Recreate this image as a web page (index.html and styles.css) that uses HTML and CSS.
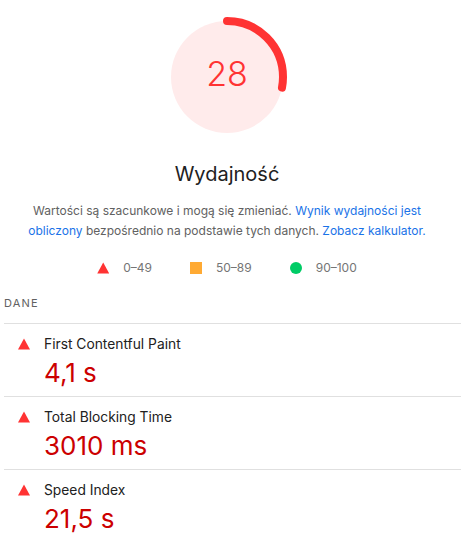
FILE: index.html
```html
<!DOCTYPE html>
<html>

<head>
    <link rel="stylesheet" href="styles.css">
</head>

<body>
    <main class="report">
        <section class="summary">
            <div class="gauge">
                <svg viewBox="0 0 120 120" width="120" height="120">
                    <circle class="gauge-base" cx="60" cy="60" r="56"></circle>
                    <circle class="gauge-arc" cx="60" cy="60" r="56" transform="rotate(-90 60 60)"></circle>
                </svg>
                <div class="gauge-value">28</div>
            </div>
            <h1 class="title">Wydajność</h1>
            <p class="desc">Wartości są szacunkowe i mogą się zmieniać. <a href="#">Wynik wydajności jest obliczony</a> bezpośrednio na podstawie tych danych. <a href="#">Zobacz kalkulator.</a></p>
            <div class="legend">
                <span class="legend-item"><span class="icon tri"></span>0–49</span>
                <span class="legend-item"><span class="icon sq"></span>50–89</span>
                <span class="legend-item"><span class="icon dot"></span>90–100</span>
            </div>
        </section>
        <section class="metrics">
            <div class="metrics-head">DANE</div>
            <div class="metric">
                <span class="icon tri"></span>
                <div>
                    <div class="metric-title">First Contentful Paint</div>
                    <div class="metric-value">4,1 s</div>
                </div>
            </div>
            <div class="metric">
                <span class="icon tri"></span>
                <div>
                    <div class="metric-title">Total Blocking Time</div>
                    <div class="metric-value">3010 ms</div>
                </div>
            </div>
            <div class="metric">
                <span class="icon tri"></span>
                <div>
                    <div class="metric-title">Speed Index</div>
                    <div class="metric-value">21,5 s</div>
                </div>
            </div>
        </section>
    </main>
</body>

</html>
```

FILE: styles.css
```css
* {
    margin: 0;
    padding: 0;
    box-sizing: border-box;
}

body {
    font-family: Inter, "Noto Sans", sans-serif;
    background: #fff;
    color: #212121;
}

.report {
    width: 461px;
}

.summary {
    width: 454px;
    display: flex;
    flex-direction: column;
    align-items: center;
    padding-top: 17px;
}

.gauge {
    position: relative;
    width: 120px;
    height: 120px;
}

.gauge svg {
    display: block;
}

.gauge-base {
    fill: #ffebeb;
}

.gauge-arc {
    fill: none;
    stroke: #ff3333;
    stroke-width: 8;
    stroke-linecap: round;
    stroke-dasharray: 98.5 351.9;
}

.gauge-value {
    position: absolute;
    top: 0;
    left: 0;
    width: 120px;
    height: 112px;
    display: flex;
    align-items: center;
    justify-content: center;
    font-size: 34px;
    font-weight: 300;
    color: #ff3333;
}

.title {
    margin-top: 23px;
    font-size: 20px;
    font-weight: 400;
    line-height: 28px;
    color: #212121;
}

.desc {
    margin-top: 13px;
    padding: 0 14px;
    font-size: 12px;
    line-height: 20px;
    text-align: center;
    color: #616161;
}

.desc a {
    color: #1a73e8;
    text-decoration: none;
}

.legend {
    margin-top: 18px;
    display: flex;
    gap: 38px;
    font-size: 12px;
    color: #757575;
}

.legend-item {
    display: flex;
    align-items: center;
    gap: 14px;
    line-height: 18px;
}

.icon {
    display: inline-block;
    width: 12px;
    height: 12px;
    flex: none;
}

.tri {
    background: #ff3333;
    clip-path: polygon(50% 5%, 100% 95%, 0 95%);
}

.sq {
    background: #ffaa33;
}

.dot {
    background: #00cc66;
    border-radius: 50%;
}

.metrics {
    margin-left: 4px;
    margin-top: 18px;
}

.metrics-head {
    font-size: 11px;
    letter-spacing: 1.2px;
    color: #616161;
    line-height: 16px;
    padding-bottom: 12px;
    border-bottom: 1px solid #e0e0e0;
}

.metric {
    display: flex;
    gap: 14px;
    padding: 11px 0 6px 14px;
    border-bottom: 1px solid #e0e0e0;
}

.metric .icon {
    margin-top: 3px;
}

.metric:last-child {
    border-bottom: none;
}

.metric-title {
    font-size: 13.8px;
    line-height: 18px;
    color: #212121;
}

.metric-value {
    margin-top: 3px;
    font-size: 26px;
    line-height: 34px;
    color: #cc0000;
}
```
